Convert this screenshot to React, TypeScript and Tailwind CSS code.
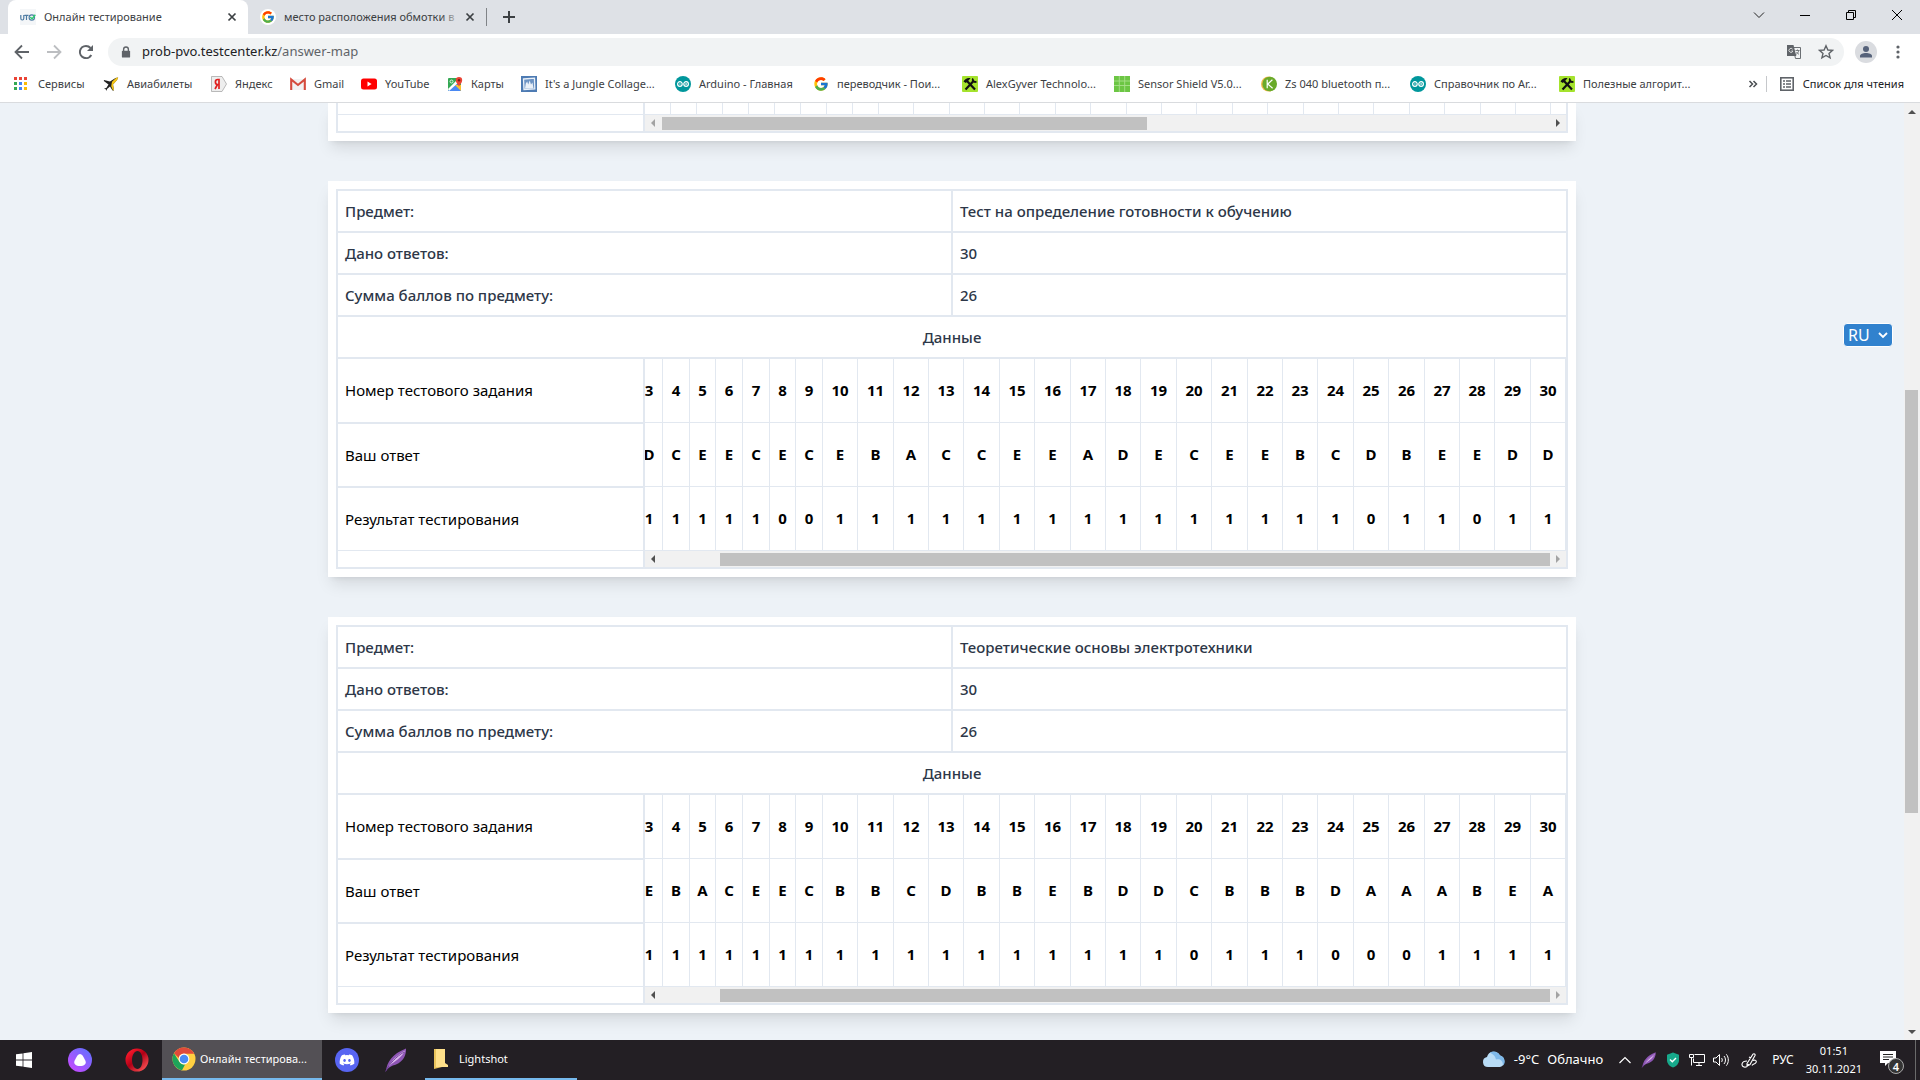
import React from "react";
import { FcGoogle } from "react-icons/fc";
import { FaDiscord } from "react-icons/fa";

type SubjectData = {
  id: string;
  title: string;
  given: string;
  score: string;
  answers: string;
  results: string;
};

const subjects: SubjectData[] = [
  {
    id: "readiness",
    title: "Тест на определение готовности к обучению",
    given: "30",
    score: "26",
    answers: "ABDCEECECEBACCEEADECEEBCDBEEDD",
    results: "111111100111111111111111011011",
  },
  {
    id: "electro",
    title: "Теоретические основы электротехники",
    given: "30",
    score: "26",
    answers: "CAEBACEECBBCDBBEBDDCBBBDAAABEA",
    results: "111111111111111111101110001111",
  },
];

const questionNumbers = Array.from({ length: 30 }, (_, i) => i + 1);

/* Whole-pixel widths of the thirty answer columns. */
const columnWidths = questionNumbers.map((n) =>
  n < 10 ? [27, 27, 26][n % 3] : [35, 36, 35, 35, 36][n % 5]
);

/* ---------- icons ---------- */

const Svg = ({ size = 16, box = "0 0 16 16", children }: { size?: number; box?: string; children: React.ReactNode }) => (
  <svg width={size} height={size} viewBox={box} fill="none" className="shrink-0" aria-hidden="true">
    {children}
  </svg>
);

const SiteIcon = () => (
  <Svg>
    <rect width="16" height="16" fill="#f4f6f8" />
    <path d="M.8 6v3.2c0 1.2.5 1.8 1.5 1.8s1.5-.6 1.5-1.8V6M4.5 6.400h4M6.5 6.400V11" stroke="#4d7ba3" strokeWidth="1.2" />
    <circle cx="11.8" cy="8.6" r="2.7" stroke="#4d7ba3" strokeWidth="1.1" />
    <path d="M10.3 8l1.7 2 3.3-4.2" stroke="#2ecc71" strokeWidth="1.4" />
  </Svg>
);

const AppsIcon = () => (
  <Svg>
    {["#ea4335", "#ea4335", "#ea4335", "#34a853", "#4285f4", "#fbbc04", "#34a853", "#4285f4", "#fbbc04"].map((c, i) => (
      <rect key={i} x={(i % 3) * 5} y={1 + Math.floor(i / 3) * 5} width="3" height="3" fill={c} />
    ))}
  </Svg>
);

const PlaneIcon = () => (
  <Svg>
    <path d="M1 4l6 1.5L12.5 2l2.5-.5L14 4l-4 4.5 1 6-1.5 0L7 10.5l-3 2.5-.2 2L3 13.5 1 12.5l2.3-.4L5.5 8.5.8 5z" fill="#222" />
    <path d="M9 5.800L13 2l2.300-.8L14.200 4 10 8.600l1 5.400-1 .6-1.800-4.300z" fill="#f5c518" />
  </Svg>
);

const YandexIcon = () => (
  <Svg>
    <path d="M.5.5h10.500L15.500 8 11 15.500H.5z" fill="#eee" stroke="#aaa" strokeWidth=".8" />
    <path d="M8 13V3.500H6.700c-1.500 0-2.300 1-2.300 2.500 0 1.300.6 2.500 2.300 2.500H8M6.500 8.500L4 13" stroke="#e02020" strokeWidth="1.7" />
  </Svg>
);

const GmailIcon = () => (
  <Svg>
    <rect x="1" y="3" width="14" height="11" fill="#f2f2f2" />
    <path d="M1.200 14V3.500L8 9l6.800-5.500V14" stroke="#d54b3d" strokeWidth="2.1" />
  </Svg>
);

const YouTubeIcon = () => (
  <Svg>
    <rect y="2.5" width="16" height="11" rx="2.5" fill="#f00" />
    <path d="M6.500 5.600v4.800L10.600 8z" fill="#fff" />
  </Svg>
);

const MapsIcon = () => (
  <Svg>
    <rect x="1" y="2" width="13" height="13" rx="1" fill="#34a853" />
    <path d="M1 14.500L9 7l5 5v3H1.500z" fill="#4a89f3" />
    <path d="M1 13L10 4l2 2-10 9z" fill="#fff" />
    <path d="M8 9l6 6V9z" fill="#fbc02d" />
    <path d="M12 10.500C11 8 8.800 7 8.800 4.200a3.200 3.200 0 016.400 0c0 2.800-2.200 3.800-3.200 6.300z" fill="#ea4335" />
    <circle cx="12" cy="4.2" r="1.2" fill="#7b1d14" />
    <circle cx="4.5" cy="5.5" r="1.5" stroke="#fff" strokeWidth=".8" />
  </Svg>
);

const JungleIcon = () => (
  <Svg>
    <rect width="16" height="16" fill="#4d7bb3" />
    <path d="M2.500 3l11-.8.3 10.800-10.800.5z" fill="#6d94c4" stroke="#e9f0f8" strokeWidth="1.3" />
    <path d="M4 12.500l.8-5 1.400-2 1 3 1.500-4 1.300 4 1.500-2 1 6z" fill="#e9f0f8" />
  </Svg>
);

const ArduinoIcon = () => (
  <Svg>
    <circle cx="8" cy="8" r="8" fill="#00979c" />
    <circle cx="4.9" cy="8" r="2.3" stroke="#fff" strokeWidth="1.2" />
    <circle cx="11.1" cy="8" r="2.3" stroke="#fff" strokeWidth="1.2" />
    <path d="M4 8h1.800M10.200 8H12M11.100 7.100v1.800" stroke="#fff" strokeWidth=".7" />
  </Svg>
);

const ToolsIcon = () => (
  <Svg>
    <rect width="16" height="16" rx="1" fill="#a5e32d" />
    <path d="M5 5l8 8.500M12 4.500L3.500 13.500" stroke="#111" strokeWidth="2.2" />
    <path d="M1.500 5.500C3 2.800 5.500 1.500 8.500 2.200L6.500 4.500 3.800 7z" fill="#111" />
    <path d="M11 2.500c-1 2 .5 4.200 3.500 3.200" stroke="#111" strokeWidth="1.8" />
  </Svg>
);

const GridIcon = () => (
  <Svg>
    <rect width="16" height="16" fill="#6cc644" />
    <path d="M5.300 0v16M10.700 0v16M0 5h16M0 9.500h16" stroke="#a9e08c" strokeWidth=".9" />
  </Svg>
);

const KIcon = () => (
  <Svg>
    <circle cx="7.5" cy="8" r="7.5" fill="#f0b84a" />
    <circle cx="8.7" cy="8" r="7.3" fill="#6aaa2a" />
    <path d="M6.200 3.800v8.400M11.400 3.800L6.800 8l4.800 4.200" stroke="#fff" strokeWidth="1.2" />
  </Svg>
);

const GoogleIcon = () => <FcGoogle className="size-4 shrink-0" aria-hidden="true" />;

const CloseIcon = () => (
  <Svg size={10} box="0 0 10 10">
    <path d="M1.500 1.500l7 7M8.500 1.500l-7 7" stroke="#3c4043" strokeWidth="1.7" />
  </Svg>
);

const FeatherIcon = ({ size }: { size: number }) => (
  <Svg size={size} box="0 0 24 24">
    <path d="M2 23C3 14 8 6 22 .5c.5 6-2.500 13-10 16-3 1-7 2-10 6.500z" fill="#8e55b5" />
    <path d="M4 19.500C7 13 13 7 21 2.500c-2 5-8 10-13.500 13.500z" fill="#dcb8ef" />
    <path d="M1.500 23.500C6 15 12 9 20 4" stroke="#6b3a95" strokeWidth=".9" />
  </Svg>
);

/* ---------- browser chrome ---------- */

const bookmarks = [
  { label: "Сервисы", Icon: AppsIcon, width: "w-[89px]" },
  { label: "Авиабилеты", Icon: PlaneIcon, width: "w-[108px]" },
  { label: "Яндекс", Icon: YandexIcon, width: "w-[79px]" },
  { label: "Gmail", Icon: GmailIcon, width: "w-[71px]" },
  { label: "YouTube", Icon: YouTubeIcon, width: "w-[86px]" },
  { label: "Карты", Icon: MapsIcon, width: "w-[74px]" },
  { label: "It's a Jungle Collage...", Icon: JungleIcon, width: "w-[154px]" },
  { label: "Arduino - Главная", Icon: ArduinoIcon, width: "w-[138px]" },
  { label: "переводчик - Пои...", Icon: GoogleIcon, width: "w-[149px]" },
  { label: "AlexGyver Technolo...", Icon: ToolsIcon, width: "w-[152px]" },
  { label: "Sensor Shield V5.0...", Icon: GridIcon, width: "w-[147px]" },
  { label: "Zs 040 bluetooth п...", Icon: KIcon, width: "w-[149px]" },
  { label: "Справочник по Ar...", Icon: ArduinoIcon, width: "w-[149px]" },
  { label: "Полезные алгорит...", Icon: ToolsIcon, width: "w-[149px]" },
];

function TabStrip() {
  return (
    <header className="flex h-[34px] shrink-0 items-stretch bg-[#dee1e6] text-[11px] text-[#3c4043]">
      <div className="ml-2 flex w-60 items-center rounded-t-lg bg-white pr-[11px] pl-3">
        <SiteIcon />
        <span className="ml-2 flex-1 whitespace-nowrap">Онлайн тестирование</span>
        <button aria-label="Закрыть вкладку"><CloseIcon /></button>
      </div>
      <div className="flex w-[238px] items-center pr-[11px] pl-3">
        <span className="grid size-4 place-items-center rounded-full bg-white">
          <FcGoogle className="size-3.5" aria-hidden="true" />
        </span>
        <span className="relative ml-2 flex-1 whitespace-nowrap">
          место расположения обмотки в
          <span className="absolute inset-y-0 right-0 w-5 bg-linear-to-r from-transparent to-[#dee1e6]" />
        </span>
        <button className="ml-1" aria-label="Закрыть вкладку"><CloseIcon /></button>
      </div>
      <div className="my-2 w-px bg-[#808387]" />
      <button className="ml-4" aria-label="Новая вкладка">
        <Svg size={12} box="0 0 12 12"><path d="M6 0v12M0 6h12" stroke="#3c4043" strokeWidth="2" /></Svg>
      </button>
      <div className="ml-auto flex pb-1">
        <button className="w-[46px] pl-[17px]" aria-label="Поиск вкладок">
          <Svg size={12} box="0 0 12 12"><path d="M1 3.500l5 5 5-5" stroke="#222" /></Svg>
        </button>
        <button className="w-[46px] pl-[17px]" aria-label="Свернуть">
          <Svg size={12} box="0 0 12 12"><path d="M1 6.500h10" stroke="#000" /></Svg>
        </button>
        <button className="w-[46px] pl-[17px]" aria-label="Восстановить">
          <Svg size={12} box="0 0 12 12"><path d="M1.500 3.500h7v7h-7zM3.500 3V1.500h7v7H9" stroke="#000" /></Svg>
        </button>
        <button className="w-[46px] pl-[17px]" aria-label="Закрыть">
          <Svg size={12} box="0 0 12 12"><path d="M1 1l10 10M11 1L1 11" stroke="#000" /></Svg>
        </button>
      </div>
    </header>
  );
}

function Toolbar() {
  return (
    <div className="flex h-9 shrink-0 items-center pr-3.5 pl-3.5">
      <button aria-label="Назад">
        <Svg><path d="M15 8H2M8 1.500L1.500 8 8 14.500" stroke="#5f6368" strokeWidth="1.8" /></Svg>
      </button>
      <button className="ml-4" aria-label="Вперёд">
        <Svg><path d="M1 8h13M8 1.500L14.500 8 8 14.500" stroke="#bcbec1" strokeWidth="1.8" /></Svg>
      </button>
      <button className="ml-4" aria-label="Обновить">
        <Svg>
          <path d="M13.300 11A6.100 6.100 0 118 1.900c1.900 0 3.400.8 4.500 2.100" stroke="#5f6368" strokeWidth="2" />
          <path d="M15 1v6H9z" fill="#5f6368" />
        </Svg>
      </button>
      <div className="ml-3.5 flex h-7 flex-1 items-center rounded-full bg-[#f1f3f4] pr-2.5 pl-3">
        <Svg size={12} box="0 0 12 14">
          <path d="M3.200 6V4a2.800 2.800 0 015.600 0v2" stroke="#5f6368" strokeWidth="1.6" />
          <rect x="1.2" y="5.5" width="9.6" height="8" rx="1" fill="#5f6368" />
        </Svg>
        <span className="ml-2.5 text-[13px] text-[#5f6368]">
          <span className="text-[#202124]">prob-pvo.testcenter.kz</span>/answer-map
        </span>
        <button className="ml-auto" aria-label="Перевести страницу">
          <Svg>
            <path d="M7 3.500h7.500v11H9.500L7 3.500z" stroke="#6b6f73" />
            <path d="M1 1h6.500l2.800 11H1z" fill="#5f6368" />
            <path d="M6.600 5.200A2 2 0 106.900 7H5.300" stroke="#e0e0e0" strokeWidth=".9" />
            <path d="M9.500 6.500h4M11.500 5.500v1M12.800 6.500c-.5 2-1.500 3-2.500 3.800M10.500 8c.5 1 1.300 1.700 2.500 2.300" stroke="#6b6f73" strokeWidth=".9" />
          </Svg>
        </button>
        <button className="ml-4" aria-label="Добавить в закладки">
          <Svg><path d="M8 1.800l1.900 4.200 4.600.4-3.500 3 1.100 4.500L8 11.500l-4.100 2.400L5 9.400l-3.500-3 4.600-.4z" stroke="#5f6368" strokeWidth="1.4" /></Svg>
        </button>
      </div>
      <button className="ml-[11px] grid size-[22px] place-items-center rounded-full bg-[#dadce0]" aria-label="Профиль">
        <Svg size={14} box="0 0 14 14">
          <circle cx="7" cy="4" r="3" fill="#56627a" />
          <path d="M1 12.500V11c0-2 3-3 6-3s6 1 6 3v1.500z" fill="#56627a" />
        </Svg>
      </button>
      <button className="ml-[13px]" aria-label="Меню">
        <Svg>
          <circle cx="8" cy="3" r="1.6" fill="#5f6368" />
          <circle cx="8" cy="8" r="1.6" fill="#5f6368" />
          <circle cx="8" cy="13" r="1.6" fill="#5f6368" />
        </Svg>
      </button>
    </div>
  );
}

function BookmarksBar() {
  return (
    <nav className="flex h-[33px] shrink-0 items-center border-b border-[#d9dbde] pb-1 pl-3.5 text-[11px] text-[#3c4043]">
      {bookmarks.map(({ label, Icon, width }) => (
        <a key={label} href="#bookmark" className={"flex shrink-0 items-center gap-2 whitespace-nowrap " + width}>
          <Icon />
          {label}
        </a>
      ))}
      <button className="ml-auto" aria-label="Другие закладки">
        <Svg size={10} box="0 0 10 10"><path d="M1.500 2l3 3-3 3M5.500 2l3 3-3 3" stroke="#4b4f53" strokeWidth="1.5" /></Svg>
      </button>
      <div className="mx-2 h-4 w-px bg-[#c6c8cb]" />
      <button className="flex items-center gap-2 pr-4 pl-1 whitespace-nowrap text-[#202124]">
        <Svg>
          <rect x="1.8" y="1.8" width="12.4" height="12.4" stroke="#5f6368" strokeWidth="1.6" />
          <path d="M4 5h2M7 5h5M4 8h2M7 8h5M4 11h2M7 11h5" stroke="#5f6368" strokeWidth="1.4" />
        </Svg>
        Список для чтения
      </button>
    </nav>
  );
}

/* ---------- page ---------- */

function HorizontalScrollbar({ thumb, atStart }: { thumb: string; atStart: boolean }) {
  return (
    <div className="flex h-4 items-center bg-[#f1f1f1]">
      <div className="grid w-[17px] shrink-0 place-items-center pr-0.5">
        <Svg size={8} box="0 0 8 8"><path d="M6 0v8L2 4z" fill={atStart ? "#a3a3a3" : "#505050"} /></Svg>
      </div>
      <div className="min-w-0 flex-1">
        <div className={"h-[13px] bg-[#c1c1c1] " + thumb} />
      </div>
      <div className="grid w-4 shrink-0 place-items-center">
        <Svg size={8} box="0 0 8 8"><path d="M2 0v8l4-4z" fill={atStart ? "#505050" : "#a3a3a3"} /></Svg>
      </div>
    </div>
  );
}

function AnswerTable({ subject }: { subject: SubjectData }) {
  const rows = [questionNumbers.map(String), subject.answers.split(""), subject.results.split("")];
  return (
    <div className="flex justify-end overflow-hidden">
      <table className="shrink-0 table-fixed border-separate border-spacing-0 text-center text-[15px] font-bold text-black">
        <colgroup>
          {columnWidths.map((w, i) => (
            <col key={i} style={{ width: w }} />
          ))}
        </colgroup>
        <tbody>
          {rows.map((cells, r) => (
            <tr key={r} className="h-16">
              {cells.map((c, i) => (
                <td key={i} className="border-r border-b border-[#e2e8f0] p-0">{c}</td>
              ))}
            </tr>
          ))}
        </tbody>
      </table>
    </div>
  );
}

function SubjectCard({ subject }: { subject: SubjectData }) {
  const info = [
    ["Предмет:", subject.title],
    ["Дано ответов:", subject.given],
    ["Сумма баллов по предмету:", subject.score],
  ];
  return (
    <section className="bg-white p-2 shadow-lg">
      <table className="w-full table-fixed border-collapse text-[15px] font-medium text-[#2d3748]">
        <tbody>
          {info.map(([name, value]) => (
            <tr key={name} className="h-[42px]">
              <th scope="row" className="border-2 border-[#e2e8f0] px-[7px] py-0 text-left font-medium">{name}</th>
              <td className="border-2 border-[#e2e8f0] px-[7px] py-0">{value}</td>
            </tr>
          ))}
          <tr className="h-[42px]">
            <th colSpan={2} className="border-2 border-[#e2e8f0] px-[7px] py-0 text-center font-medium">Данные</th>
          </tr>
        </tbody>
      </table>
      <div className="grid grid-cols-4 border-2 border-t-0 border-[#e2e8f0]">
        <div className="flex flex-col border-r-2 border-[#e2e8f0] text-[15px] text-black">
          <div className="flex h-[65px] items-center border-b-2 border-[#e2e8f0] px-[7px]">Номер тестового задания</div>
          <div className="flex h-16 items-center border-b-2 border-[#e2e8f0] px-[7px]">Ваш ответ</div>
          <div className="flex h-[63px] items-center border-b border-[#e2e8f0] px-[7px]">Результат тестирования</div>
        </div>
        <div className="col-span-3 min-w-0">
          <AnswerTable subject={subject} />
          <HorizontalScrollbar thumb="ml-[58px]" atStart={false} />
        </div>
      </div>
    </section>
  );
}

function PreviousCardEnd() {
  return (
    <section className="bg-white px-2 pb-2 shadow-lg">
      <div className="grid grid-cols-4 border-x-2 border-b-2 border-[#e2e8f0]">
        <div className="border-r-2 border-[#e2e8f0]">
          <div className="h-3 border-b border-[#e2e8f0]" />
        </div>
        <div className="col-span-3 min-w-0">
          <div className="flex h-3 overflow-hidden border-b border-[#e2e8f0]">
            {questionNumbers.map((n) => (
              <div key={n} className="shrink-0 border-r border-[#e2e8f0]" style={{ width: n < 10 ? 26 : columnWidths[n - 1] }} />
            ))}
          </div>
          <HorizontalScrollbar thumb="mr-[403px]" atStart />
        </div>
      </div>
    </section>
  );
}

function Page() {
  return (
    <main className="flex min-h-0 flex-1 overflow-hidden bg-[#edf2f7]">
      <div className="relative flex-1">
        <div className="mx-auto flex w-full max-w-[1248px] flex-col gap-10">
          <PreviousCardEnd />
          {subjects.map((s) => (
            <SubjectCard key={s.id} subject={s} />
          ))}
        </div>
        <div className="absolute top-[220px] right-[11px] flex items-center rounded border border-white bg-[#3182ce] text-white">
          <select aria-label="Язык" defaultValue="RU" className="w-12 appearance-none py-0 pl-1 text-base leading-[22px]">
            <option>RU</option>
            <option>KZ</option>
          </select>
          <span className="pointer-events-none absolute right-1">
            <Svg size={10} box="0 0 10 10"><path d="M1 3l4 4 4-4" stroke="#fff" strokeWidth="1.8" /></Svg>
          </span>
        </div>
      </div>
      <div className="flex w-4 flex-col items-start bg-[#f1f1f1] pl-px">
        <div className="grid h-[17px] w-[13px] place-items-center">
          <Svg size={8} box="0 0 8 8"><path d="M0 6h8L4 2z" fill="#505050" /></Svg>
        </div>
        <div className="flex w-[13px] flex-1 flex-col">
          <div className="flex-[270]" />
          <div className="flex-[423] bg-[#c1c1c1]" />
          <div className="flex-[210]" />
        </div>
        <div className="grid h-[17px] w-[13px] place-items-center">
          <Svg size={8} box="0 0 8 8"><path d="M0 2h8L4 6z" fill="#505050" /></Svg>
        </div>
      </div>
    </main>
  );
}

/* ---------- taskbar ---------- */

const ChromeIcon = () => (
  <Svg size={24} box="0 0 24 24">
    <circle cx="12" cy="12" r="11.5" fill="#ffcf41" />
    <path d="M2 6.200A11.500 11.500 0 0122.200 6.700H12a5.400 5.400 0 00-5.200 4.300z" fill="#e04a3a" />
    <path d="M2 6.200l5.300 8.500a5.400 5.400 0 005.900 2.600L10 23.300A11.500 11.500 0 012 6.200z" fill="#1ea45a" />
    <circle cx="12" cy="12" r="5.4" fill="#fff" />
    <circle cx="12" cy="12" r="4.3" fill="#4a8af4" />
  </Svg>
);

function Taskbar() {
  return (
    <footer className="flex h-10 shrink-0 items-stretch bg-[#231f24] text-[11px] text-white">
      <button className="grid w-12 place-items-center" aria-label="Пуск">
        <Svg><path d="M0 2.300L6.600 1.400v6.200H0zM7.400 1.300L16 0v7.600H7.400zM0 8.400h6.600v6.200L0 13.700zM7.400 8.400H16V16l-8.600-1.300z" fill="#fff" /></Svg>
      </button>
      <button className="ml-2 grid w-12 place-items-center" aria-label="Алиса">
        <Svg size={24} box="0 0 24 24">
          <defs>
            <linearGradient id="alice" x1="20" y1="3" x2="4" y2="21" gradientUnits="userSpaceOnUse">
              <stop stopColor="#6a6cff" />
              <stop offset="1" stopColor="#c04cff" />
            </linearGradient>
          </defs>
          <circle cx="12" cy="12" r="12" fill="url(#alice)" />
          <path d="M12 6c2 0 3.500 2.800 5.300 6.500C19 16 16 18 12 18s-7-2-5.300-5.500C8.500 8.800 10 6 12 6z" fill="#fff" />
        </Svg>
      </button>
      <button className="ml-2 grid w-[50px] place-items-center" aria-label="Opera">
        <Svg size={24} box="0 0 24 24">
          <defs>
            <linearGradient id="opera" x1="4" y1="2" x2="22" y2="22" gradientUnits="userSpaceOnUse">
              <stop stopColor="#ff1b2d" />
              <stop offset=".45" stopColor="#b00016" />
              <stop offset="1" stopColor="#ff5a5a" />
            </linearGradient>
          </defs>
          <path fillRule="evenodd" d="M12 .5a11.500 11.500 0 100 23 11.500 11.500 0 000-23zM12.500 3c3 0 5 4 5 9s-2 9-5 9-5.500-4-5.500-9 2.500-9 5.500-9z" fill="url(#opera)" />
        </Svg>
      </button>
      <button className="flex w-40 items-center gap-1 border-b-2 border-[#76b9ed] bg-[#535055] pl-2.5 whitespace-nowrap">
        <ChromeIcon />
        Онлайн тестирова...
      </button>
      <button className="grid w-[50px] place-items-center" aria-label="Discord">
        <span className="grid size-6 place-items-center rounded-full bg-[#5865f2]"><FaDiscord className="size-4" aria-hidden="true" /></span>
      </button>
      <button className="grid w-12 place-items-center" aria-label="Lightshot"><FeatherIcon size={24} /></button>
      <button className="ml-[5px] flex w-[152px] items-center gap-1.5 border-b-2 border-[#76b9ed] pl-1">
        <Svg size={24} box="0 0 24 24">
          <path d="M5 2h8v18l-8 2z" fill="#e9c35c" />
          <path d="M7 2h9v14l3 2v2H7z" fill="#ffe08a" />
        </Svg>
        Lightshot
      </button>
      <div className="ml-auto flex items-center">
        <button className="flex items-center gap-2 text-[13px]">
          <Svg size={24} box="0 0 24 24">
            <path d="M6 19a5 5 0 01-1-9.900A7 7 0 0118 7.500 6 6 0 0118 19z" fill="#b9dcf6" />
            <path d="M8 4.500a7 7 0 0110 3 6 6 0 013 10c0-6-4-7-7-6-1-4-3-5-6-7z" fill="#7fb9ea" />
          </Svg>
          <span>-9°C</span>
          <span>Облачно</span>
        </button>
        <button className="ml-4" aria-label="Скрытые значки">
          <Svg size={12} box="0 0 12 12"><path d="M.5 9L6 3.500 11.500 9" stroke="#fff" strokeWidth="1.2" /></Svg>
        </button>
        <button className="ml-2.5" aria-label="Lightshot"><FeatherIcon size={16} /></button>
        <button className="ml-2" aria-label="Защита">
          <Svg><path d="M8 .5l6 2.300V8c0 4-3 6.500-6 7.500C5 14.500 2 12 2 8V2.800z" fill="#17a98b" /><path d="M5 7.500l2.300 2.300L11 6" stroke="#fff" strokeWidth="1.4" /></Svg>
        </button>
        <button className="ml-2" aria-label="Сеть">
          <Svg><path d="M5.500 2.500h10v8h-11v-4M.5 2.500h4v3h-4zM2.500 5.500v8M10 10.500v3M7 13.500h6" stroke="#fff" /></Svg>
        </button>
        <button className="ml-2" aria-label="Громкость">
          <Svg><path d="M.5 6H3l3.500-3.500v11L3 10H.5zM8.500 6c1 1 1 3 0 4M11 4c2 2.200 2 5.800 0 8M13.300 2.300c2.700 3.200 2.700 8.200 0 11.400" stroke="#fff" /></Svg>
        </button>
        <button className="ml-3" aria-label="Windows Ink">
          <Svg size={17} box="0 0 17 17"><path d="M6 11.500L12 2.200c1-1 2.500 0 2 1.300L9 12.500l-3 1.500zM6 9c-6 0-6 5-3 6 2.500.5 4-1.500 4.500-3M12 8.500c2-1 4 0 3 2s-3 1-4 3M8 5l2 1" stroke="#fff" strokeWidth="1.1" /></Svg>
        </button>
        <button className="ml-3.5 text-xs">РУС</button>
        <button className="ml-3 text-center leading-[18px]">
          <span className="block">01:51</span>
          <span className="block">30.11.2021</span>
        </button>
        <button className="relative mr-[13px] ml-4 size-6" aria-label="Уведомления">
          <Svg size={24} box="0 0 24 24">
            <path d="M2 3h16v12h-8l-3 3v-3H2z" fill="#fff" />
            <path d="M5 6.500h10M5 9h10M5 11.500h6" stroke="#222" />
          </Svg>
          <span className="absolute top-2.5 left-2.5 grid size-4 place-items-center rounded-full border border-[#aaa] bg-[#333] text-[11px] leading-none font-semibold">4</span>
        </button>
        <div className="mr-1 h-10 w-px bg-[#6a6a6a]" />
      </div>
    </footer>
  );
}

export default function App() {
  return (
    <div className="flex h-screen flex-col overflow-hidden bg-white font-['Noto_Sans',sans-serif]">
      <TabStrip />
      <Toolbar />
      <BookmarksBar />
      <Page />
      <Taskbar />
    </div>
  );
}
